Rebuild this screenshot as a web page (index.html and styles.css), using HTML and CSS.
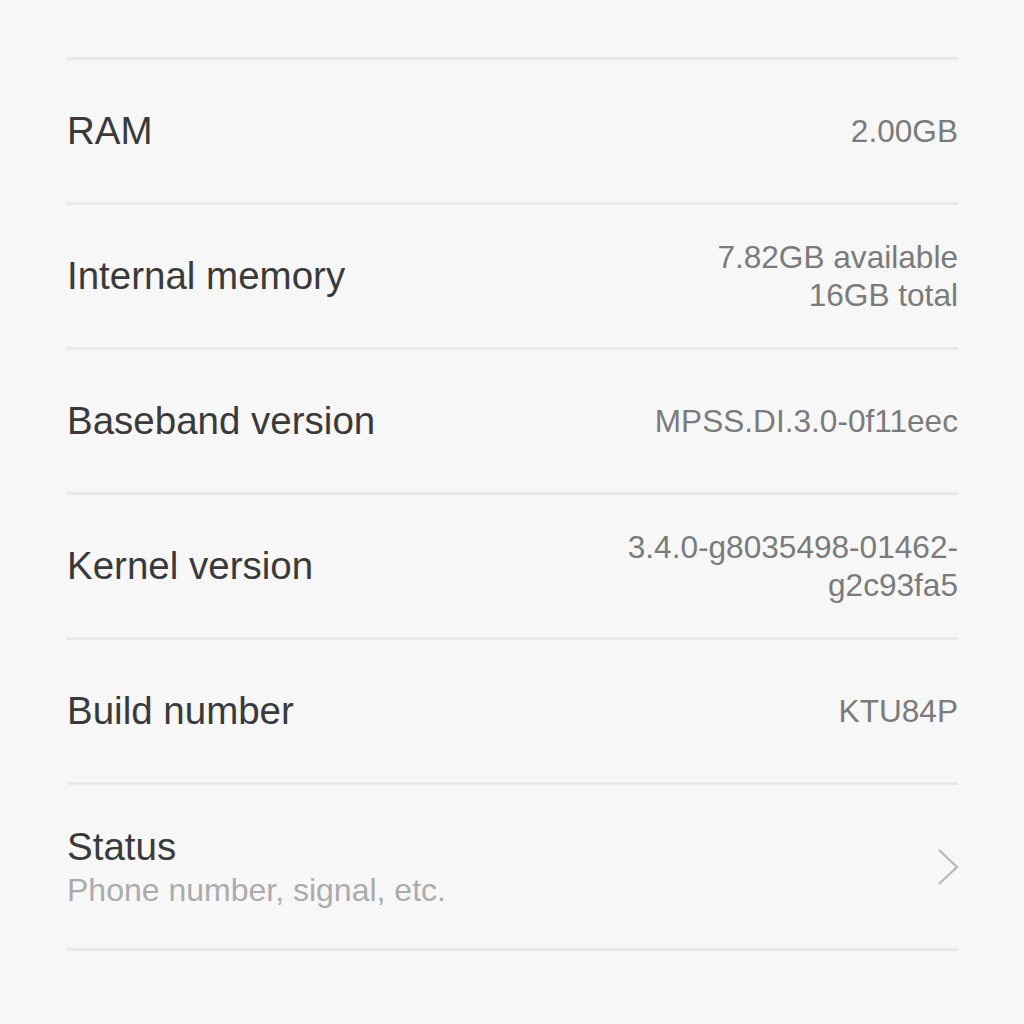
FILE: index.html
```html
<!DOCTYPE html>
<html>
<head>
<meta charset="utf-8">
<link rel="stylesheet" href="styles.css">
</head>
<body>
<div class="list">
  <div class="row row-cut"></div>
  <div class="row">
    <div class="label">RAM</div>
    <div class="value">2.00GB</div>
  </div>
  <div class="row">
    <div class="label">Internal memory</div>
    <div class="value">7.82GB available<br>16GB total</div>
  </div>
  <div class="row">
    <div class="label">Baseband version</div>
    <div class="value">MPSS.DI.3.0-0f11eec</div>
  </div>
  <div class="row">
    <div class="label">Kernel version</div>
    <div class="value">3.4.0-g8035498-01462-<br>g2c93fa5</div>
  </div>
  <div class="row">
    <div class="label">Build number</div>
    <div class="value">KTU84P</div>
  </div>
  <div class="row row-tall">
    <div class="text">
      <div class="title">Status</div>
      <div class="sub">Phone number, signal, etc.</div>
    </div>
    <svg class="chevron" width="22" height="38" viewBox="0 0 22 38">
      <polyline points="2,2 20,19 2,36" fill="none" stroke="#b8b8b8" stroke-width="2.2"/>
    </svg>
  </div>
</div>
</body>
</html>
```
FILE: styles.css
```css
html, body {
  margin: 0;
  padding: 0;
  background: #f7f7f7;
  font-family: "Liberation Sans", Arial, sans-serif;
}

.list {
  padding: 0 66px 0 67px;
}

.row {
  display: flex;
  align-items: center;
  justify-content: space-between;
  min-height: 142px;
  border-bottom: 3px solid #e9e9e9;
}

.row-cut {
  min-height: 57px;
}

.row-tall {
  min-height: 163px;
}

.label,
.title {
  font-size: 38.5px;
  color: #3a3a3a;
  line-height: 44px;
}

.value {
  font-size: 31.6px;
  color: #7b7b7b;
  line-height: 38px;
  text-align: right;
}

.text {
  padding-top: 2px;
}

.sub {
  font-size: 32px;
  color: #ababab;
  line-height: 42px;
}

.chevron {
  display: block;
  margin-right: -1px;
}
```
